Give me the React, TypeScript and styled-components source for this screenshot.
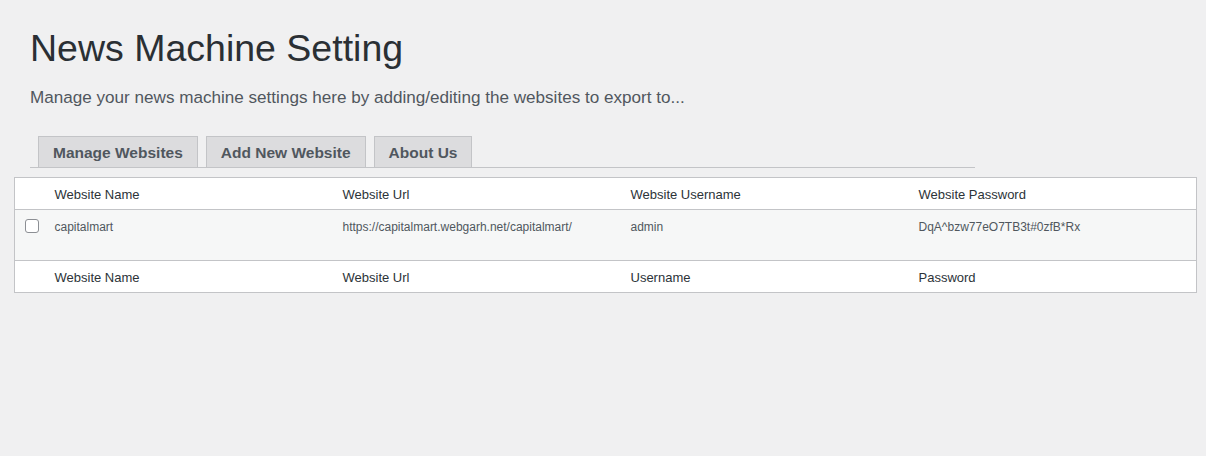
import React from "react";
import styled, { createGlobalStyle } from "styled-components";

const Global = createGlobalStyle`
  html, body { margin: 0; padding: 0; background: #f0f0f1; }
  body { font-family: "Segoe UI", "Liberation Sans", Arial, sans-serif; color: #3c434a; }
`;

const Page = styled.div`
  padding: 0 9px 0 14px;
`;

const Head = styled.div`
  padding: 23px 0 0 16px;
`;

const Title = styled.h1`
  margin: 0;
  font-size: 37.5px;
  font-weight: 400;
  line-height: 50px;
  color: #2a2f34;
`;

const Lead = styled.p`
  margin: 13px 0 0;
  font-size: 17.1px;
  line-height: 24px;
  color: #50575e;
`;

const TabBar = styled.nav`
  display: flex;
  gap: 8px;
  width: 945px;
  margin-top: 26px;
  padding-left: 8px;
  box-sizing: border-box;
  border-bottom: 1px solid #c3c4c7;
`;

const Tab = styled.a`
  display: block;
  padding: 6px 14px 4px;
  margin-bottom: -1px;
  font-size: 15.5px;
  font-weight: 600;
  line-height: 20px;
  color: #50575e;
  background: #dcdcde;
  border: 1px solid #c3c4c7;
  text-decoration: none;
`;

const Table = styled.table`
  margin-top: 9px;
  width: 100%;
  border-collapse: collapse;
  background: #fff;
  border: 1px solid #c3c4c7;
  table-layout: fixed;
`;

const CheckCol = styled.col`
  width: 30px;
`;

const HeadCell = styled.th`
  text-align: left;
  font-weight: 400;
  font-size: 13px;
  line-height: 20px;
  color: #2c3338;
  padding: 7px 10px 4px;
`;

const HeadRow = styled.tr<{ $bottom?: boolean }>`
  border-bottom: ${(p) => (p.$bottom ? "1px solid #c3c4c7" : "none")};
  border-top: ${(p) => (p.$bottom ? "none" : "1px solid #c3c4c7")};
`;

const BodyRow = styled.tr`
  background: #f6f7f7;
`;

const Cell = styled.td`
  vertical-align: top;
  font-size: 12px;
  line-height: 18px;
  color: #50575e;
  padding: 8px 10px 24px;
`;

const CheckCell = styled.td`
  vertical-align: top;
  padding: 9px 0 0 10px;
`;

const Box = styled.span`
  display: block;
  width: 12px;
  height: 12px;
  border: 1px solid #8c8f94;
  border-radius: 3px;
  background: #fff;
`;

const cols = ["Website Name", "Website Url", "Website Username", "Website Password"];
const foot = ["Website Name", "Website Url", "Username", "Password"];

export default function App() {
  return (
    <>
      <Global />
      <Page>
        <Head>
          <Title>News Machine Setting</Title>
          <Lead>Manage your news machine settings here by adding/editing the websites to export to...</Lead>
          <TabBar>
            <Tab>Manage Websites</Tab>
            <Tab>Add New Website</Tab>
            <Tab>About Us</Tab>
          </TabBar>
        </Head>
        <Table>
          <colgroup>
            <CheckCol />
            <col />
            <col />
            <col />
            <col />
          </colgroup>
          <thead>
            <HeadRow $bottom>
              <HeadCell />
              {cols.map((c) => (
                <HeadCell key={c}>{c}</HeadCell>
              ))}
            </HeadRow>
          </thead>
          <tbody>
            <BodyRow>
              <CheckCell>
                <Box />
              </CheckCell>
              <Cell>capitalmart</Cell>
              <Cell>https://capitalmart.webgarh.net/capitalmart/</Cell>
              <Cell>admin</Cell>
              <Cell>DqA^bzw77eO7TB3t#0zfB*Rx</Cell>
            </BodyRow>
          </tbody>
          <tfoot>
            <HeadRow>
              <HeadCell />
              {foot.map((c) => (
                <HeadCell key={c}>{c}</HeadCell>
              ))}
            </HeadRow>
          </tfoot>
        </Table>
      </Page>
    </>
  );
}
